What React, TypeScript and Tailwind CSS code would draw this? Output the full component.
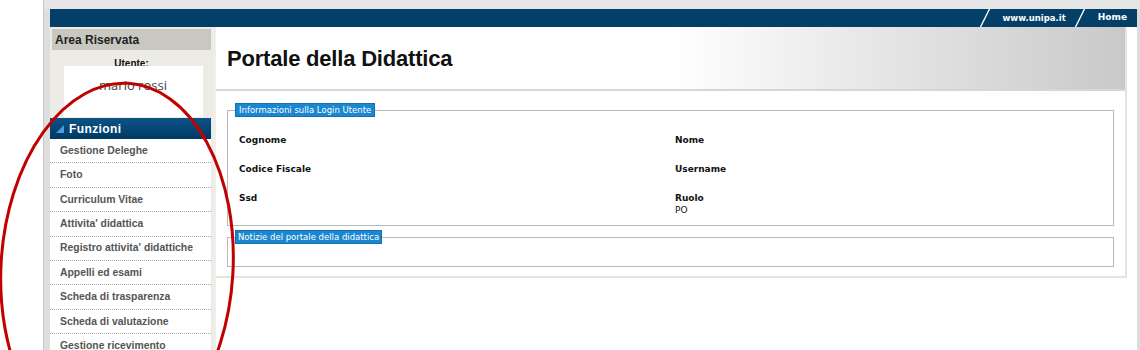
import React from "react";

const menu = [
  "Gestione Deleghe",
  "Foto",
  "Curriculum Vitae",
  "Attivita' didattica",
  "Registro attivita' didattiche",
  "Appelli ed esami",
  "Scheda di trasparenza",
  "Scheda di valutazione",
  "Gestione ricevimento",
];

function Slash() {
  return (
    <svg width="12" height="18" viewBox="0 0 12 18" className="block shrink-0">
      <line x1="1.5" y1="18" x2="10.5" y2="0" stroke="white" strokeWidth="1.4" />
    </svg>
  );
}

export default function App() {
  return (
    <div className="relative w-[1140px] h-[350px] overflow-hidden bg-white flex" style={{ fontFamily: '"Liberation Sans", Arial, sans-serif' }}>
      <div className="w-[43px] shrink-0 bg-white" />
      <div className="flex-1 flex flex-col bg-[#e6e6e6] border-l border-[#c8c8c8]">
        <div className="h-[9px] shrink-0" />
        <div className="flex flex-1 min-h-0">
          <div className="w-[6px] shrink-0 bg-[#dedede]" />
          <div className="w-[1087px] shrink-0 flex flex-col bg-white">
            {/* top bar */}
            <div className="h-[18px] shrink-0 bg-[#033f67] flex items-center justify-end pr-[10px] text-white text-[8.5px] font-bold" style={{ fontFamily: '"DejaVu Sans", Verdana, sans-serif' }}>
              <Slash />
              <span className="ml-[12px] mr-[8px]">www.unipa.it</span>
              <Slash />
              <span className="ml-[12px] text-[9px]">Home</span>
            </div>
            <div className="flex flex-1 min-h-0">
              {/* sidebar */}
              <div className="w-[163px] shrink-0 bg-[#ecebe6] flex flex-col">
                <div className="shrink-0 mx-[2px] mt-[2px] h-[21px] bg-[#c9c8c0] flex items-center pl-[3px] pt-[1px] text-[12px] font-bold text-[#222]">
                  Area Riservata
                </div>
                <div className="shrink-0 h-[68px] flex flex-col items-center">
                  <div className="shrink-0 h-[16px] overflow-hidden pt-[8px] text-[10px] font-bold leading-[12px] text-[#111]">
                    Utente:
                  </div>
                  <div className="shrink-0 ml-[3px] w-[139px] h-[51px] bg-white flex justify-center pt-[11px] text-[13px] leading-[16px] text-[#444]" style={{ fontFamily: '"Open Sans", sans-serif' }}>
                    mario rossi
                  </div>
                </div>
                <div className="shrink-0 w-[161px] h-[21px] bg-linear-to-b from-[#0d5386] to-[#003a64] flex items-center text-white text-[12px] font-bold tracking-[0.4px]">
                  <svg width="8" height="8" viewBox="0 0 8 8" className="ml-[6px] mr-[5px] mt-[1px]">
                    <polygon points="8,0 8,8 0,8" fill="#4b9ce0" />
                  </svg>
                  Funzioni
                </div>
                <div className="shrink-0 w-[161px] bg-white flex flex-col">
                  {menu.map((m) => (
                    <div key={m} className="h-[24.4px] shrink-0 border-b border-dotted border-[#a8a8a8] flex items-center pl-[10px] text-[10.4px] font-bold text-[#555]">
                      {m}
                    </div>
                  ))}
                </div>
              </div>
              <div className="w-[3px] shrink-0 bg-[#eeeeea]" />
              {/* main */}
              <div className="w-[911px] shrink-0 self-start flex flex-col border-r-2 border-b-2 border-[#e4e4e0]">
                <div className="h-[64px] shrink-0 border-b-2 border-[#d6d6d2] bg-linear-to-r from-white from-50% to-[#c9c9c9] flex items-center pl-[11px] pt-[1px]">
                  <h1 className="text-[22px] font-bold text-[#111] tracking-[-0.2px]">Portale della Didattica</h1>
                </div>
                <div className="px-[11px] pt-[12px] pb-[9px] flex flex-col gap-[4px] text-[8.5px]" style={{ fontFamily: '"DejaVu Sans", Verdana, sans-serif' }}>
                  <fieldset className="border border-[#b8b8b8] h-[123px]">
                    <legend className="ml-[7px] bg-[#1b87d0] border border-[#1570b0] px-[3px] h-[14px] leading-[12px] text-white">
                      Informazioni sulla Login Utente
                    </legend>
                    <div className="grid grid-cols-[436px_1fr] pl-[11px] pt-[18px] text-[9px] font-bold text-[#111] leading-[10px]">
                      <div className="h-[29px]">Cognome</div>
                      <div className="h-[29px]">Nome</div>
                      <div className="h-[29px]">Codice Fiscale</div>
                      <div className="h-[29px]">Username</div>
                      <div>Ssd</div>
                      <div>
                        Ruolo
                        <div className="font-normal mt-[2px]">PO</div>
                      </div>
                    </div>
                  </fieldset>
                  <fieldset className="border border-[#b8b8b8] h-[37px]">
                    <legend className="ml-[7px] bg-[#1b87d0] border border-[#1570b0] px-[2px] h-[14px] leading-[12px] text-white">
                      Notizie del portale della didattica
                    </legend>
                  </fieldset>
                </div>
              </div>
              <div className="flex-1 bg-white" />
            </div>
          </div>
          <div className="flex-1 bg-[#dcdcdc]" />
        </div>
      </div>
      {/* annotation ellipse */}
      <svg className="absolute left-0 top-0 pointer-events-none" width="1140" height="350">
        <ellipse cx="117" cy="268" rx="116" ry="185" transform="rotate(3.5 117 268)" fill="none" stroke="#c10000" strokeWidth="3" />
      </svg>
    </div>
  );
}
